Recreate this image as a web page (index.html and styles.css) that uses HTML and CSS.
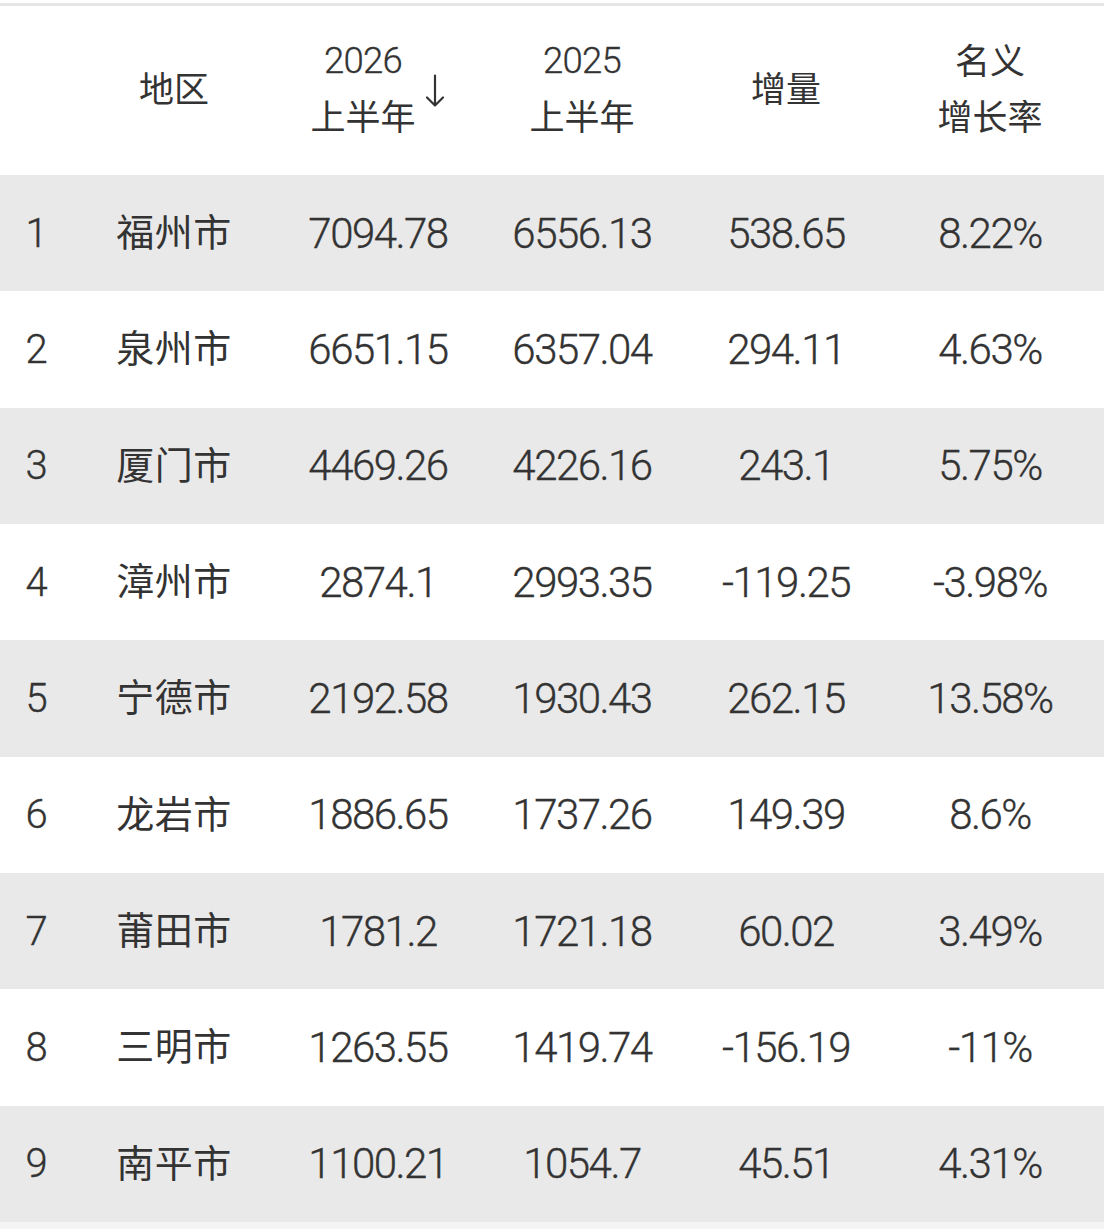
FILE: index.html
```html
<!DOCTYPE html>
<html lang="zh-CN">
<head>
<meta charset="utf-8">
<title>福建各市数据</title>
<link rel="stylesheet" href="styles.css">
</head>
<body>
<div class="table">
  <div class="thead">
    <div class="cell"></div>
    <div class="cell"><span class="hz">地区</span></div>
    <div class="cell">
      <div class="sortwrap">
        <div class="stack"><span class="hn">2026</span><span class="hz">上半年</span></div>
        <svg class="arrow" width="22" height="34" viewBox="0 0 22 34" aria-hidden="true"><path d="M11 1.5V31.5M3 23.5L11 31.5L19 23.5" fill="none" stroke="#333" stroke-width="2.2" stroke-linecap="round" stroke-linejoin="round"/></svg>
      </div>
    </div>
    <div class="cell"><div class="stack"><span class="hn">2025</span><span class="hz">上半年</span></div></div>
    <div class="cell"><span class="hz">增量</span></div>
    <div class="cell"><div class="stack"><span class="hz">名义</span><span class="hz">增长率</span></div></div>
  </div>

  <div class="row odd">
    <div class="cell idx">1</div><div class="cell name">福州市</div><div class="cell num">7094.78</div><div class="cell num">6556.13</div><div class="cell num">538.65</div><div class="cell num">8.22%</div>
  </div>
  <div class="row">
    <div class="cell idx">2</div><div class="cell name">泉州市</div><div class="cell num">6651.15</div><div class="cell num">6357.04</div><div class="cell num">294.11</div><div class="cell num">4.63%</div>
  </div>
  <div class="row odd">
    <div class="cell idx">3</div><div class="cell name">厦门市</div><div class="cell num">4469.26</div><div class="cell num">4226.16</div><div class="cell num">243.1</div><div class="cell num">5.75%</div>
  </div>
  <div class="row">
    <div class="cell idx">4</div><div class="cell name">漳州市</div><div class="cell num">2874.1</div><div class="cell num">2993.35</div><div class="cell num">-119.25</div><div class="cell num">-3.98%</div>
  </div>
  <div class="row odd">
    <div class="cell idx">5</div><div class="cell name">宁德市</div><div class="cell num">2192.58</div><div class="cell num">1930.43</div><div class="cell num">262.15</div><div class="cell num">13.58%</div>
  </div>
  <div class="row">
    <div class="cell idx">6</div><div class="cell name">龙岩市</div><div class="cell num">1886.65</div><div class="cell num">1737.26</div><div class="cell num">149.39</div><div class="cell num">8.6%</div>
  </div>
  <div class="row odd">
    <div class="cell idx">7</div><div class="cell name">莆田市</div><div class="cell num">1781.2</div><div class="cell num">1721.18</div><div class="cell num">60.02</div><div class="cell num">3.49%</div>
  </div>
  <div class="row">
    <div class="cell idx">8</div><div class="cell name">三明市</div><div class="cell num">1263.55</div><div class="cell num">1419.74</div><div class="cell num">-156.19</div><div class="cell num">-11%</div>
  </div>
  <div class="row odd">
    <div class="cell idx">9</div><div class="cell name">南平市</div><div class="cell num">1100.21</div><div class="cell num">1054.7</div><div class="cell num">45.51</div><div class="cell num">4.31%</div>
  </div>
  <div class="tail"></div>
</div>
</body>
</html>
```
FILE: styles.css
```css
html, body {
  margin: 0;
  padding: 0;
  background: #ffffff;
}
body {
  padding-top: 3px;
  color: #333333;
  font-family: "Roboto", "Noto Sans CJK SC", sans-serif;
}
.table {
  border-top: 3px solid #e6e6e6;
  width: 1104px;
}
.thead, .row {
  display: grid;
  grid-template-columns: 72px repeat(5, 204px) 1fr;
}
.thead {
  height: 169px;
  background: #ffffff;
}
.row {
  height: 116.33px;
  background: #ffffff;
}
.row.odd {
  background: #e9e9e9;
}
.cell {
  display: flex;
  align-items: center;
  justify-content: center;
  white-space: nowrap;
}
.stack {
  display: flex;
  flex-direction: column;
  align-items: center;
  line-height: 56px;
}
.sortwrap {
  display: flex;
  align-items: center;
  gap: 8px;
}
.arrow {
  display: block;
}
.hz {
  font-family: "Noto Sans CJK SC", sans-serif;
  font-size: 35px;
  line-height: 56px;
  margin-top: -4px;
  margin-bottom: 4px;
}
.hn {
  font-size: 36.5px;
  font-weight: 300;
  letter-spacing: -0.8px;
  line-height: 56px;
  margin-top: -2px;
  margin-bottom: 2px;
  -webkit-text-stroke: 0.3px #333333;
}
.idx {
  font-size: 40px;
  font-weight: 300;
  letter-spacing: -1px;
  -webkit-text-stroke: 0.35px #333333;
}
.name {
  font-family: "Noto Sans CJK SC", sans-serif;
  font-size: 38px;
  letter-spacing: 0.5px;
  padding-bottom: 7px;
}
.num {
  font-size: 42px;
  font-weight: 300;
  letter-spacing: -1.5px;
  -webkit-text-stroke: 0.35px #333333;
}
.tail {
  height: 8px;
  background: #f4f4f4;
}
```
